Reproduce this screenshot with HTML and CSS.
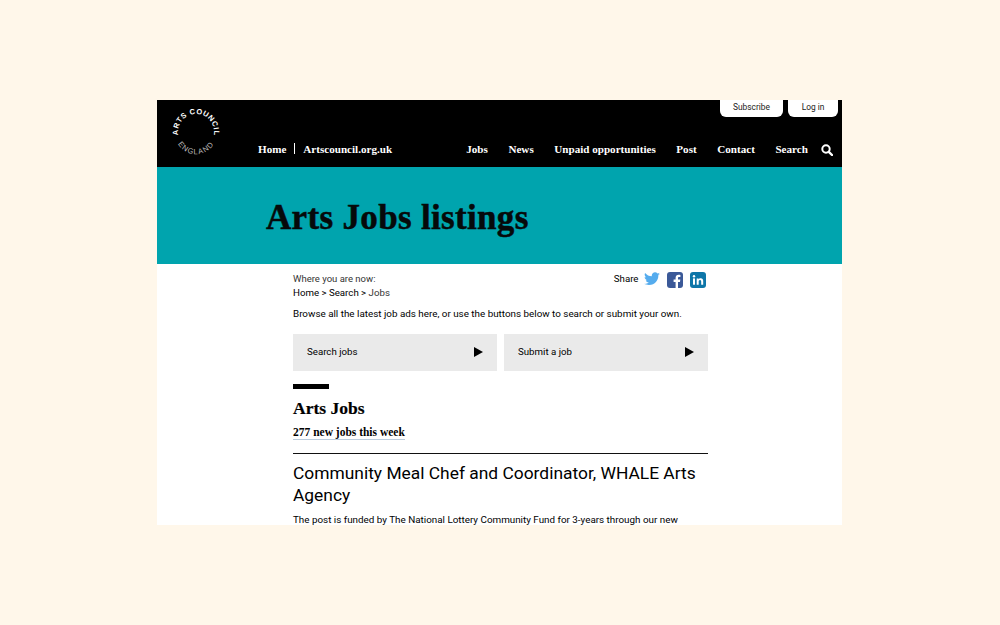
FILE: index.html
```html
<!DOCTYPE html>
<html lang="en">
<head>
  <meta charset="UTF-8">
  <meta name="viewport" content="width=device-width, initial-scale=1.0">
  <title>Arts Jobs listings</title>
  <link rel="stylesheet" href="styles.css">
</head>
<body>

<div class="strona">

  <!-- HEADER -->
  <header class="naglowek">
    <svg class="logo" width="56" height="56" viewBox="0 0 56 56">
      <defs>
        <path id="lukGora" d="M10.300 29 A18 18 0 1 1 43 36"></path>
        <path id="lukDol" d="M8.500 35 A21 21 0 0 0 47.500 35"></path>
      </defs>
      <text class="logo-gora"><textPath href="#lukGora">ARTS COUNCIL</textPath></text>
      <text class="logo-dol"><textPath href="#lukDol" startOffset="50%" text-anchor="middle">ENGLAND</textPath></text>
    </svg>

    <div class="naglowek-prawa">
      <div class="konto">
        <a class="konto-btn konto-sub" href="#">Subscribe</a>
        <a class="konto-btn konto-log" href="#">Log in</a>
      </div>
      <nav class="menu">
        <div class="menu-lewe">
          <a href="#">Home</a>
          <span class="kreska"></span>
          <a href="#">Artscouncil.org.uk</a>
        </div>
        <div class="menu-prawe">
          <a href="#">Jobs</a>
          <a href="#">News</a>
          <a href="#">Unpaid opportunities</a>
          <a href="#">Post</a>
          <a href="#">Contact</a>
          <a href="#">Search</a>
          <svg class="lupa" width="12" height="12" viewBox="0 0 12 12">
            <circle cx="5" cy="5" r="3.700" fill="none" stroke="#fff" stroke-width="2"></circle>
            <path d="M7.800 7.800 L11 11" stroke="#fff" stroke-width="2.400" stroke-linecap="round"></path>
          </svg>
        </div>
      </nav>
    </div>
  </header>

  <!-- TITLE BAND -->
  <div class="pas">
    <h1>Arts Jobs listings</h1>
  </div>

  <!-- CONTENT -->
  <main class="tresc">
    <div class="gora">
      <div class="okruszki">
        <p class="okruszki-tytul">Where you are now:</p>
        <p><a href="#">Home</a> &gt; <a href="#">Search</a> &gt; <span class="szary">Jobs</span></p>
      </div>
      <div class="share">
        <span>Share</span>
        <svg width="16" height="14" viewBox="0 0 24 20">
          <path fill="#55acee" d="M24 2.400c-.9.4-1.800.7-2.800.8 1-.6 1.800-1.600 2.200-2.700-1 .6-2 1-3.100 1.200C19.300.7 18 0 16.600 0c-2.700 0-4.900 2.200-4.900 4.900 0 .4 0 .8.100 1.100C7.700 5.800 4.100 3.800 1.700.9c-.4.700-.7 1.600-.7 2.500 0 1.700.9 3.200 2.200 4.100-.8 0-1.600-.2-2.200-.6v.1c0 2.400 1.700 4.400 3.900 4.800-.4.100-.8.200-1.300.2-.3 0-.6 0-.9-.1.600 2 2.400 3.400 4.600 3.400-1.700 1.300-3.800 2.100-6.100 2.100-.4 0-.8 0-1.200-.1C2.200 18.200 4.800 19 7.500 19c9.100 0 14-7.500 14-14v-.6c1-.7 1.800-1.500 2.500-2z"></path>
        </svg>
        <svg class="ikona-fb" width="16" height="16" viewBox="0 0 16 16">
          <rect width="16" height="16" rx="3" fill="#3b5998"></rect>
          <path fill="#fff" d="M11 16V10h2l.3-2.400H11V6.100c0-.7.2-1.100 1.200-1.100h1.200V2.900c-.2 0-.9-.1-1.800-.1-1.800 0-3 1.100-3 3.100v1.700h-2V10h2v6z"></path>
        </svg>
        <svg class="ikona-in" width="16" height="16" viewBox="0 0 16 16">
          <rect width="16" height="16" rx="3" fill="#0e76a8"></rect>
          <rect x="3" y="6.400" width="2" height="6.300" fill="#fff"></rect>
          <circle cx="4" cy="4.300" r="1.200" fill="#fff"></circle>
          <path fill="#fff" d="M6.700 6.400h1.900v.9c.3-.5 1-1.100 2.100-1.100 2 0 2.500 1.300 2.500 3.100v3.400h-2V9.700c0-.8-.2-1.700-1.200-1.700s-1.300.8-1.300 1.700v3H6.700z"></path>
        </svg>
      </div>
    </div>

    <p class="opis">Browse all the latest job ads here, or use the buttons below to search or submit your own.</p>

    <div class="przyciski">
      <a class="przycisk" href="#"><span>Search jobs</span><i class="trojkat"></i></a>
      <a class="przycisk" href="#"><span>Submit a job</span><i class="trojkat"></i></a>
    </div>

    <div class="belka"></div>
    <h2>Arts Jobs</h2>
    <a class="nowe" href="#">277 new jobs this week</a>
    <hr class="linia">

    <h3>Community Meal Chef and Coordinator, WHALE Arts Agency</h3>
    <p class="wpis">The post is funded by The National Lottery Community Fund for 3-years through our new</p>
  </main>

</div>

</body>
</html>
```

FILE: styles.css
```css
* {
  margin: 0;
  padding: 0;
  box-sizing: border-box;
}
body {
  background-color: #fff7ea;
  font-family: Roboto, "Liberation Sans", Arial, sans-serif;
  color: #000;
  height: 625px;
  overflow: hidden;
  padding-top: 100px;
}
a {
  color: inherit;
  text-decoration: none;
}
.strona {
  width: 685px;
  height: 425px;
  margin-left: 157px;
  background: white;
  overflow: hidden;
}

/* Header */
.naglowek {
  display: flex;
  height: 67px;
  background: black;
  color: white;
}
.logo {
  margin: 6px 0 0 11px;
  flex: none;
}
.logo-gora {
  font: bold 7.5px "Liberation Sans", sans-serif;
  letter-spacing: 0.5px;
  fill: white;
}
.logo-dol {
  font: 7.5px "Liberation Sans", sans-serif;
  letter-spacing: 1px;
  fill: #bbb;
}
.naglowek-prawa {
  flex: 1;
  padding: 0 9px 0 34px;
  display: flex;
  flex-direction: column;
}
.konto {
  display: flex;
  justify-content: flex-end;
  gap: 5px;
  margin-right: -5px;
}
.konto-btn {
  height: 17px;
  background: white;
  color: #222;
  font-size: 8.400px;
  line-height: 15px;
  text-align: center;
  border-radius: 0 0 6px 6px;
}
.konto-sub {
  width: 63px;
}
.konto-log {
  width: 50px;
}
.menu {
  display: flex;
  justify-content: space-between;
  align-items: center;
  margin-top: 17px;
  height: 30px;
  font-family: "Liberation Serif", serif;
  font-weight: bold;
  font-size: 11.100px;
}
.menu-lewe {
  display: flex;
  align-items: center;
  gap: 8px;
}
.kreska {
  width: 1px;
  height: 11px;
  background: white;
  margin-top: -2px;
}
.menu-prawe {
  display: flex;
  align-items: center;
  gap: 20.600px;
}
.lupa {
  margin-left: -7.500px;
  margin-top: 1px;
}

/* Title band */
.pas {
  height: 97px;
  background: #00a4ae;
  padding: 31px 0 0 109px;
}
h1 {
  font-family: "Liberation Serif", serif;
  font-size: 35px;
  line-height: 40px;
  letter-spacing: 0.33px;
  font-weight: bold;
  color: #06090a;
  -webkit-text-stroke: 0.5px #06090a;
}

/* Content */
.tresc {
  width: 415px;
  margin-left: 136px;
  padding-top: 8px;
}
.gora {
  display: flex;
  justify-content: space-between;
  font-size: 9.700px;
  line-height: 13.500px;
}
.okruszki-tytul {
  font-size: 9.500px;
}
.okruszki-tytul,
.szary {
  color: #333;
}
.share {
  display: flex;
  align-items: flex-start;
  margin-right: 2px;
  height: 16px;
}
.share span {
  margin-right: 5.500px;
}
.ikona-fb {
  margin-left: 7px;
}
.ikona-in {
  margin-left: 7px;
}
.opis {
  font-size: 9.850px;
  line-height: 14px;
  margin-top: 8px;
}
.przyciski {
  display: flex;
  gap: 7px;
  margin-top: 13px;
}
.przycisk {
  flex: 1;
  height: 37px;
  background: #eaeaea;
  display: flex;
  align-items: center;
  justify-content: space-between;
  padding: 0 14px 2px;
  font-size: 9.700px;
}
.trojkat {
  width: 0;
  height: 0;
  border-left: 9px solid black;
  border-top: 5px solid transparent;
  border-bottom: 5px solid transparent;
}
.belka {
  width: 36px;
  height: 5px;
  background: black;
  margin-top: 13px;
}
h2 {
  font-family: "Liberation Serif", serif;
  font-size: 17.500px;
  line-height: 20px;
  font-weight: bold;
  margin-top: 9px;
  -webkit-text-stroke: 0.2px #000;
}
.nowe {
  display: inline-block;
  font-family: "Liberation Serif", serif;
  font-size: 11.500px;
  font-weight: bold;
  line-height: 13px;
  margin-top: 8px;
  border-bottom: 1px solid #bcd;
}
.linia {
  border: none;
  height: 1px;
  background: #111;
  margin-top: 13px;
}
h3 {
  font-size: 17.400px;
  line-height: 22px;
  font-weight: normal;
  margin-top: 8px;
}
.wpis {
  font-size: 9.850px;
  line-height: 14px;
  margin-top: 7px;
}
```
